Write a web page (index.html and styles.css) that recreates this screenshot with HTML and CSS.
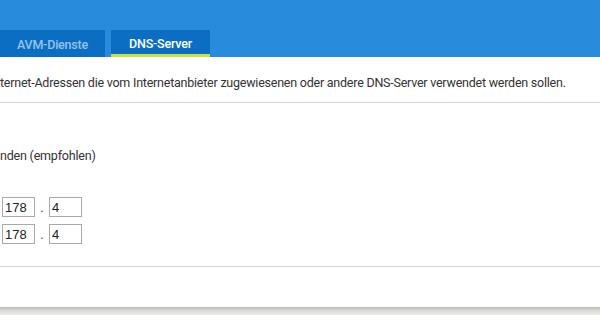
FILE: index.html
```html
<!DOCTYPE html>
<html lang="de">
<head>
<meta charset="utf-8">
<link rel="stylesheet" href="styles.css">
</head>
<body>
<div class="page">
  <header class="header">
    <nav class="tabs">
      <div class="tab">AVM-Dienste</div>
      <div class="tab active">DNS-Server</div>
    </nav>
  </header>
  <main class="content">
    <p class="intro">ternet-Adressen die vom Internetanbieter zugewiesenen oder andere DNS-Server verwendet werden sollen.</p>
    <section class="settings">
      <p class="option">nden (empfohlen)</p>
      <div class="ip-rows">
        <div class="ip-row">
          <input class="ip-field" type="text" value="178">
          <span class="dot">.</span>
          <input class="ip-field" type="text" value="4">
        </div>
        <div class="ip-row">
          <input class="ip-field" type="text" value="178">
          <span class="dot">.</span>
          <input class="ip-field" type="text" value="4">
        </div>
      </div>
    </section>
    <div class="footer-space"></div>
  </main>
  <div class="shadow"></div>
</div>
</body>
</html>
```
FILE: styles.css
```css
html, body {
  margin: 0;
  padding: 0;
}
body {
  width: 600px;
  height: 315px;
  overflow: hidden;
  background: #fff;
  font-family: Roboto, "Open Sans", sans-serif;
  color: #333;
}
.page {
  display: flex;
  flex-direction: column;
  height: 315px;
}
.header {
  height: 57px;
  background: #288bdb;
  display: flex;
  align-items: flex-end;
}
.tabs {
  display: flex;
  gap: 6px;
}
.tab {
  box-sizing: border-box;
  width: 105px;
  height: 27px;
  background: #0b6ec3;
  color: #94c4ef;
  font-size: 12.5px;
  font-weight: 500;
  letter-spacing: -0.2px;
  display: flex;
  align-items: center;
  justify-content: center;
  padding-top: 1px;
}
.tab.active {
  width: 99px;
  color: #fff;
  border-bottom: 3px solid #c5e33a;
  padding-top: 3px;
}
.content {
  flex: 1;
  display: flex;
  flex-direction: column;
}
.intro {
  margin: 0;
  height: 46px;
  box-sizing: border-box;
  padding-top: 18px;
  font-size: 12.5px;
  letter-spacing: -0.23px;
  line-height: 16px;
  white-space: nowrap;
  border-bottom: 1px solid #d3d3d3;
}
.settings {
  height: 164px;
  box-sizing: border-box;
  border-bottom: 1px solid #d3d3d3;
  padding-top: 45px;
}
.option {
  margin: 0;
  font-size: 12.5px;
  letter-spacing: -0.2px;
  line-height: 16px;
}
.ip-rows {
  margin-top: 33px;
  display: flex;
  flex-direction: column;
  gap: 7px;
}
.ip-row {
  display: flex;
  align-items: center;
  padding-left: 2px;
}
.ip-field {
  box-sizing: border-box;
  width: 33px;
  height: 20px;
  margin: 0;
  padding: 0 2px;
  border: 1px solid #a9a9a9;
  font-family: "Liberation Sans", Arial, sans-serif;
  font-size: 13px;
  color: #222;
  outline: none;
}
.dot {
  width: 13px;
  text-align: center;
  font-size: 13px;
  color: #444;
}
.ip-field + .dot + .ip-field {
  margin-left: 0;
}
.dot {
  margin-right: 0;
  width: 14px;
}
.footer-space {
  flex: 1;
}
.shadow {
  height: 8px;
  background: linear-gradient(#b9bab3, #d8d9d2 40%, #ecece6);
}
```
